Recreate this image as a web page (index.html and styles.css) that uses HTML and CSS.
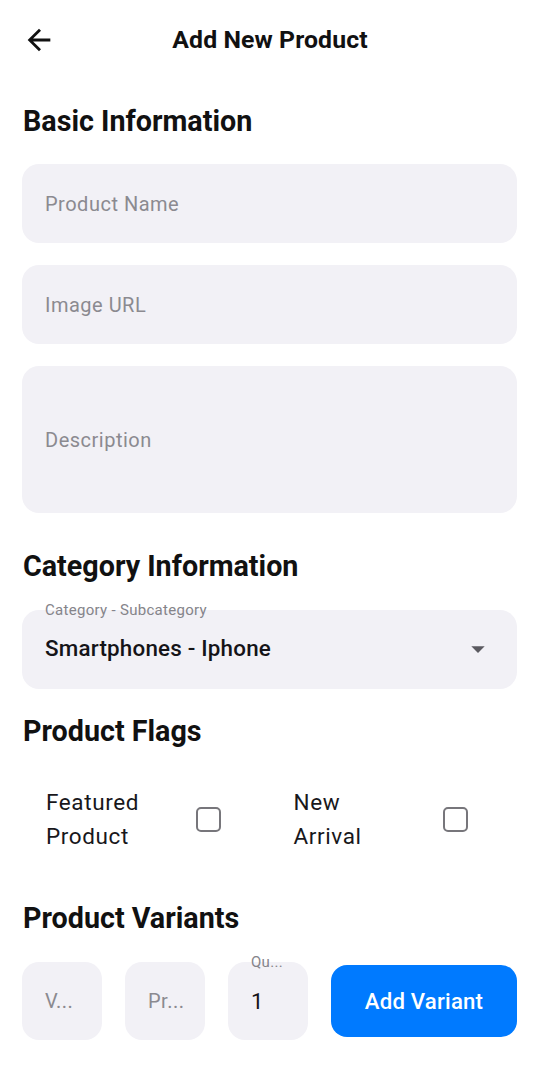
FILE: index.html
```html
<!DOCTYPE html>
<html lang="en">
<head>
<meta charset="utf-8">
<title>Add New Product</title>
<link rel="stylesheet" href="styles.css">
</head>
<body>
<div class="page">
  <header class="appbar">
    <svg class="back" viewBox="0 0 24 24" width="34" height="34"><path d="M20 11H7.83l5.59-5.59L12 4l-8 8 8 8 1.41-1.41L7.83 13H20v-2z" fill="#111"/></svg>
    <h1 class="title">Add New Product</h1>
  </header>

  <h2 class="section s-basic">Basic Information</h2>
  <div class="field"><span class="ph">Product Name</span></div>
  <div class="field"><span class="ph">Image URL</span></div>
  <div class="field tall"><span class="ph">Description</span></div>

  <h2 class="section s-cat">Category Information</h2>
  <div class="field select">
    <span class="float-label">Category - Subcategory</span>
    <span class="value">Smartphones - Iphone</span>
    <svg class="caret" viewBox="0 0 24 24" width="32" height="32"><path d="M7 10l5 5 5-5z" fill="#5b5a60"/></svg>
  </div>

  <h2 class="section s-flags">Product Flags</h2>
  <div class="flags">
    <label class="flag"><span class="flag-text">Featured Product</span><span class="box"></span></label>
    <label class="flag"><span class="flag-text">New Arrival</span><span class="box"></span></label>
  </div>

  <h2 class="section s-var">Product Variants</h2>
  <div class="variants">
    <div class="vbox"><span class="ph">V...</span></div>
    <div class="vbox"><span class="ph">Pr...</span></div>
    <div class="vbox"><span class="float-label">Qu...</span><span class="num">1</span></div>
    <button class="add">Add Variant</button>
  </div>
</div>
</body>
</html>
```

FILE: styles.css
```css
* { box-sizing: border-box; }
html, body { margin: 0; padding: 0; background: #fff; }
body {
  font-family: Roboto, "Liberation Sans", sans-serif;
  color: #111;
  width: 540px;
  height: 1078px;
  overflow: hidden;
}
.page { padding: 0 23px 0 22px; }

.appbar {
  height: 80px;
  display: flex;
  align-items: center;
  justify-content: center;
  position: relative;
  margin: 0 -23px 0 -22px;
}
.back { position: absolute; left: 22px; top: 23px; }
.title {
  margin: 0;
  font-size: 24.8px;
  line-height: 30px;
  font-weight: 700;
  letter-spacing: 0.1px;
}

.section {
  margin: 0;
  font-size: 28.7px;
  line-height: 32px;
  font-weight: 700;
  padding-left: 1px;
}
.s-basic { margin-top: 25px; margin-bottom: 27px; }
.s-cat { margin-top: 37px; margin-bottom: 28px; }
.s-flags { margin-top: 26px; margin-bottom: 38px; }
.s-var { margin-top: 49px; margin-bottom: 28px; }

.field {
  height: 79px;
  background: #f2f1f6;
  border-radius: 17px;
  display: flex;
  align-items: center;
  padding-left: 23px;
  margin-bottom: 22px;
  position: relative;
}
.field.tall { height: 147px; margin-bottom: 0; }
.ph {
  font-size: 20px;
  color: #8b8a90;
  letter-spacing: 0.5px;
}
.select { margin-bottom: 0; padding-left: 23px; padding-bottom: 4px; }
.float-label {
  position: absolute;
  left: 23px;
  top: -9px;
  font-size: 15px;
  line-height: 18px;
  color: #85848a;
  letter-spacing: 0.3px;
}
.value {
  font-size: 22.4px;
  font-weight: 500;
  color: #151418;
  letter-spacing: 0.2px;
}
.caret { position: absolute; left: 440px; top: 23px; }

.flags {
  display: grid;
  grid-template-columns: 1fr 1fr;
}
.flag {
  display: flex;
  align-items: center;
  padding: 0 49px 0 24px;
}
.flag-text {
  width: 112px;
  font-size: 22.5px;
  line-height: 34px;
  letter-spacing: 0.6px;
  color: #18171b;
}
.box {
  margin-left: auto;
  width: 25px;
  height: 25px;
  border: 2.5px solid #77767b;
  border-radius: 5px;
}

.variants {
  display: flex;
  align-items: center;
  gap: 23px;
}
.vbox {
  width: 80px;
  height: 78px;
  background: #f2f1f6;
  border-radius: 17px;
  display: flex;
  align-items: center;
  padding-left: 23px;
  position: relative;
  flex-shrink: 0;
}
.vbox .float-label { top: -9px; left: 23px; }
.num { font-size: 22px; color: #151418; }
.add {
  flex: 1;
  height: 72px;
  border: none;
  border-radius: 16px;
  background: #007aff;
  color: #fff;
  font-family: Roboto, "Liberation Sans", sans-serif;
  font-size: 22.2px;
  font-weight: 500;
  letter-spacing: 0.2px;
}
```
